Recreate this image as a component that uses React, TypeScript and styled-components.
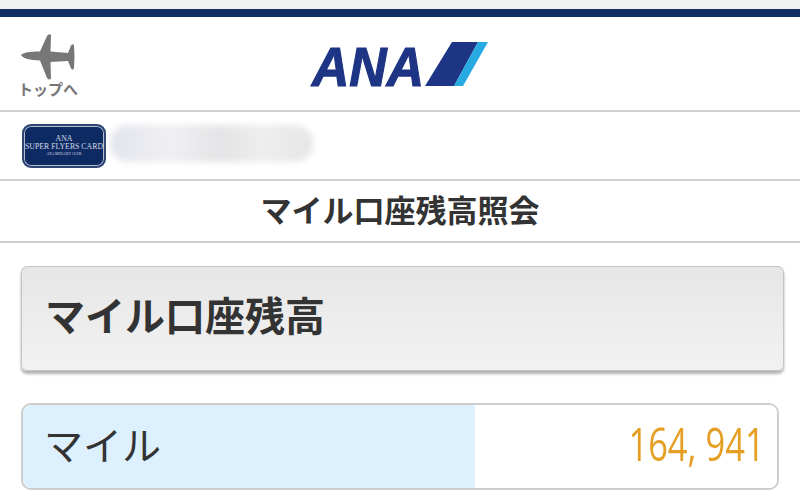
import React from 'react';
import styled, { createGlobalStyle } from 'styled-components';

const jpFont = `"Liberation Sans", "Noto Sans CJK JP", sans-serif`;

const GlobalStyle = createGlobalStyle`
html, body {
  margin: 0;
  padding: 0;
  background: #fff;
  overflow: hidden;
}
`;

const Page = styled.div`
  width: 800px;
  height: 503px;
  overflow: hidden;
  background: #fff;
  font-family: ${jpFont};
  color: #333;
`;

const TopStrip = styled.div`
  height: 9px;
  background: #f1f2f2;
  border-bottom: 8px solid #0f2f66;
`;

const Header = styled.header`
  height: 93px;
  display: grid;
  grid-template-columns: 1fr auto 1fr;
  align-items: center;
  padding-left: 20px;
  border-bottom: 2px solid #cfcfcf;
`;

const TopLink = styled.a`
  width: 60px;
  display: flex;
  flex-direction: column;
  align-items: center;
  margin: 3px 0 0 -2px;
  color: #777;
  font-size: 15px;
  font-weight: 700;
  line-height: 17px;
  white-space: nowrap;
`;

const Logo = styled.svg`
  display: block;
  width: 180px;
  height: 60px;
  margin: 2px 19px 0 0;
  overflow: visible;
`;

const MemberRow = styled.div`
  height: 67px;
  display: flex;
  align-items: center;
  gap: 4px;
  padding-left: 22px;
  border-bottom: 2px solid #cfcfcf;
`;

const MemberCard = styled.div`
  box-sizing: border-box;
  width: 84px;
  height: 44px;
  margin-top: 1px;
  display: flex;
  flex-direction: column;
  align-items: center;
  justify-content: center;
  border-radius: 9px;
  background: #0e2a63;
  border: 2px solid #2f4470;
  box-shadow: inset 0 0 0 1px #b4bfd0;
  color: #d5dbe8;
  font-family: "Liberation Serif", serif;
  line-height: 8px;
  font-size: 7.8px;
  white-space: nowrap;
`;

const TinyLine = styled.span`
  font-size: 3.6px;
  line-height: 6px;
`;

const BlurredName = styled.div`
  width: 203px;
  height: 37px;
  margin-top: -4px;
  border-radius: 18px;
  background: linear-gradient(90deg, #e3e5ec 0%, #f0f0f3 30%, #e4e4e6 55%, #eeeeef 75%, #e6e6e8 100%);
  filter: blur(3px);
`;

const PageTitle = styled.h1`
  box-sizing: border-box;
  height: 62px;
  margin: 0;
  padding-bottom: 6px;
  display: flex;
  align-items: center;
  justify-content: center;
  border-bottom: 2px solid #cfcfcf;
  font-size: 31px;
  font-weight: 700;
  color: #333;
`;

const Content = styled.main`
  padding: 23px 16px 0 21px;
`;

const SectionHeading = styled.h2`
  box-sizing: border-box;
  height: 105px;
  margin: 0;
  display: flex;
  align-items: center;
  padding: 0 0 10px 23px;
  border: 1px solid #c4c4c4;
  border-radius: 6px;
  background: linear-gradient(#e6e6e6, #f2f2f2);
  box-shadow: 0 3px 3px rgba(0, 0, 0, 0.3);
  font-size: 40px;
  font-weight: 700;
  color: #333;
`;

const BalanceRow = styled.div`
  box-sizing: border-box;
  width: 758px;
  height: 87px;
  margin-top: 32px;
  display: grid;
  grid-template-columns: 452px 1fr;
  border: 2px solid #cdcdcd;
  border-radius: 10px;
  overflow: hidden;
`;

const BalanceLabel = styled.div`
  display: flex;
  align-items: center;
  padding: 0 0 8px 21px;
  background: #dcf0fe;
  font-size: 39px;
  color: #333;
`;

const BalanceValue = styled.div`
  display: flex;
  align-items: center;
  justify-content: flex-end;
  padding: 0 12px 8px 0;
  background: #fff;
  font-family: "Open Sans", sans-serif;
  font-size: 46px;
  font-weight: 400;
  color: #e59f25;
  white-space: pre;
`;

const NarrowDigits = styled.span`
  display: inline-block;
  transform: scaleX(0.75);
  transform-origin: right center;
`;

const PlaneIcon = () => (
  <svg width="56" height="48" viewBox="20 31 56 48">
    <path
      fill="#777"
      d="M21 53 C23 50.5 30 49.5 40 49.5 L47 34 Q49 31 51 33 L50.5 49.5 L68 51 L71 43.5 Q73 41 74 43.5 L74.5 55 L74 66 Q73 69 71 66.5 L68 59 L50.5 60 L51 76 Q50 79 47 76 L40 58.5 C30 58 23 56.5 21 53 Z"
    />
  </svg>
);

const AnaLogo = () => (
  <Logo viewBox="0 -6 180 60">
    <text
      x="1"
      y="45"
      fontFamily='"Liberation Sans", sans-serif'
      fontSize="56"
      fontWeight="700"
      fontStyle="italic"
      fill="#1d3584"
      stroke="#1d3584"
      strokeWidth="1.2"
      textLength="112"
      lengthAdjust="spacingAndGlyphs"
    >
      ANA
    </text>
    <polygon points="114,45 141,1 167,1 143,45" fill="#1d3584" />
    <polygon points="143,45 167,1 177,1 152,45" fill="#27a9e1" />
  </Logo>
);

export default function App() {
  return (
    <Page>
      <GlobalStyle />
      <TopStrip />
      <Header>
        <TopLink>
          <PlaneIcon />
          トップへ
        </TopLink>
        <AnaLogo />
      </Header>
      <MemberRow>
        <MemberCard>
          <span>ANA</span>
          <span>SUPER FLYERS CARD</span>
          <TinyLine>ANA MEDAILY CLUB</TinyLine>
        </MemberCard>
        <BlurredName />
      </MemberRow>
      <PageTitle>マイル口座残高照会</PageTitle>
      <Content>
        <SectionHeading>マイル口座残高</SectionHeading>
        <BalanceRow>
          <BalanceLabel>マイル</BalanceLabel>
          <BalanceValue>
            <NarrowDigits>164, 941</NarrowDigits>
          </BalanceValue>
        </BalanceRow>
      </Content>
    </Page>
  );
}
